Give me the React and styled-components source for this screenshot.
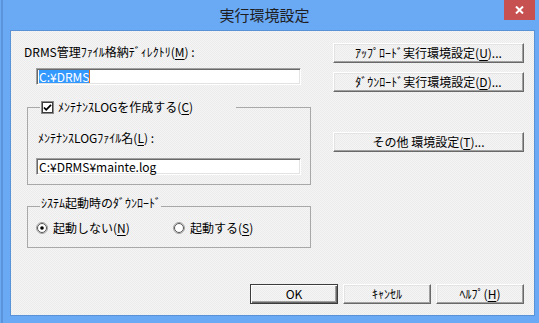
import React from 'react';
import styled, { createGlobalStyle, css } from 'styled-components';

const GlobalStyle = createGlobalStyle`
  html, body {
    margin: 0;
    padding: 0;
    overflow: hidden;
    background: #6aa9f4;
  }
  body {
    font-family: "Noto Sans CJK JP", "Noto Sans", sans-serif;
  }
`;

const face = css`
  background: repeating-conic-gradient(#f5f5f5 0% 25%, #ebebeb 0% 50%) 0 0 / 2px 2px;
`;

const Window = styled.div`
  width: 539px;
  height: 323px;
  display: flex;
  flex-direction: column;
  background: #6aa9f4;
  box-shadow: inset 1px 0 #6aa9f4, inset 3px 0 #5b94da;
`;

const TitleBar = styled.div`
  height: 30px;
  display: flex;
  align-items: flex-start;
  padding-right: 4px;
  flex-shrink: 0;
`;

const Title = styled.div`
  flex: 1;
  padding-left: 25px;
  text-align: center;
  font-size: 15px;
  line-height: 30px;
  color: #1e1e1e;
`;

const CloseButton = styled.div`
  width: 31px;
  height: 20px;
  background: #c75050;
  display: flex;
  align-items: center;
  justify-content: center;
`;

const Client = styled.div`
  flex: 1;
  margin: 0 4px 7px 10px;
  border: 1px solid #5a92d8;
  ${face};
  display: flex;
  flex-direction: column;
  padding: 12px 10px 11px 13px;
  font-size: 12px;
  line-height: 15px;
  color: #000;
`;

const Main = styled.div`
  display: flex;
  justify-content: space-between;
`;

const LeftColumn = styled.div`
  width: 287px;
  display: flex;
  flex-direction: column;
`;

const RightColumn = styled.div`
  width: 191px;
  display: flex;
  flex-direction: column;
`;

const Label = styled.div`
  margin-top: ${p => p.$top || 0}px;
  padding-left: ${p => p.$indent || 0}px;
  white-space: nowrap;
`;

const Key = styled.span`
  text-decoration: underline;
  text-underline-offset: 2px;
`;

const Edit = styled.div`
  box-sizing: border-box;
  width: 265px;
  height: 17px;
  margin-top: ${p => p.$top || 0}px;
  margin-left: ${p => p.$left || 0}px;
  background: #fff;
  border: 1px solid;
  border-color: #a0a0a0 #fff #fff #a0a0a0;
  box-shadow: inset 1px 1px #696969, inset -1px -1px #e3e3e3;
  padding: 0 2px;
  display: flex;
  align-items: center;
  white-space: nowrap;
  line-height: 13px;
`;

const Selected = styled.span`
  background: #3399ff;
  color: #fff;
`;

const Caret = styled.span`
  display: inline-block;
  width: 1px;
  height: 13px;
  background: #e07020;
`;

const Group = styled.fieldset`
  margin: ${p => p.$top || 0}px 0 0 3px;
  padding: 0 ${p => p.$padR || 0}px ${p => p.$padB || 0}px 8px;
  border: 1px solid #a8a8a8;
  min-width: 0;
`;

const Legend = styled.legend`
  margin-left: 4px;
  padding: 0 0 ${p => p.$padB || 0}px 1px;
  width: ${p => (p.$w ? `${p.$w}px` : 'auto')};
  box-sizing: border-box;
  display: flex;
  align-items: center;
  gap: 4px;
  line-height: ${p => p.$lh || 15}px;
  white-space: nowrap;
`;

const RadioRow = styled.div`
  margin-top: 2px;
  display: grid;
  grid-template-columns: 137px auto;
`;

const Option = styled.div`
  display: flex;
  align-items: center;
  gap: 5px;
  white-space: nowrap;
`;

const Button = styled.button`
  box-sizing: border-box;
  width: ${p => p.$w || 88}px;
  height: 20px;
  margin: ${p => p.$top || 0}px 0 0 0;
  padding: 0;
  font: 12px/14px "Noto Sans CJK JP", "Noto Sans", sans-serif;
  color: #000;
  background: transparent;
  border: 1px solid;
  border-color: #fff #696969 #696969 #fff;
  box-shadow: inset -1px -1px #a0a0a0, inset 1px 1px #e3e3e3;
  white-space: nowrap;
  ${p => p.$default && css`
    border: 1px solid #3c3c3c;
    box-shadow: inset 1px 1px #fff, inset -1px -1px #696969, inset -2px -2px #a0a0a0;
  `}
`;

const Footer = styled.div`
  margin-top: auto;
  display: flex;
  justify-content: flex-end;
  gap: 5px;
`;

function CheckBox() {
  return (
    <svg width="13" height="13" viewBox="0 0 13 13">
      <rect x="0.5" y="0.5" width="12" height="12" fill="#fff" stroke="#8a8a8a" />
      <rect x="1.5" y="1.5" width="10" height="10" fill="none" stroke="#3c3c3c" />
      <path d="M3 6.5 L5.2 8.8 L10 3.8" fill="none" stroke="#000" strokeWidth="1.8" />
    </svg>
  );
}

function Radio({ checked }) {
  return (
    <svg width="12" height="12" viewBox="0 0 12 12">
      <circle cx="6" cy="6" r="5.5" fill="#fff" stroke="#a0a0a0" />
      <circle cx="6" cy="6" r="4.5" fill="#fff" stroke="#555" />
      {checked && <circle cx="6" cy="6" r="1.8" fill="#000" />}
    </svg>
  );
}

export default function App() {
  return (
    <Window>
      <GlobalStyle />
      <TitleBar>
        <Title>実行環境設定</Title>
        <CloseButton>
          <svg width="9" height="8" viewBox="0 0 9 8">
            <path d="M1 0.5 L8 7.5 M8 0.5 L1 7.5" stroke="#fff" strokeWidth="2" />
          </svg>
        </CloseButton>
      </TitleBar>
      <Client>
        <Main>
          <LeftColumn>
            <Label $top={1}>DRMS管理ﾌｧｲﾙ格納ﾃﾞｨﾚｸﾄﾘ(<Key>M</Key>) :</Label>
            <Edit $top={9} $left={12}>
              <Selected>C:¥DRMS</Selected>
              <Caret />
            </Edit>
            <Group $top={14} $padB={9}>
              <Legend $w={196} $lh={16}>
                <CheckBox />
                <span>ﾒﾝﾃﾅﾝｽLOGを作成する(<Key>C</Key>)</span>
              </Legend>
              <Label $top={15} $indent={2}>ﾒﾝﾃﾅﾝｽLOGﾌｧｲﾙ名(<Key>L</Key>) :</Label>
              <Edit $top={13}>C:¥DRMS¥mainte.log</Edit>
            </Group>
            <Group $top={10} $padB={12}>
              <Legend $padB={8}>
                <span>ｼｽﾃﾑ起動時のﾀﾞｳﾝﾛｰﾄﾞ</span>
              </Legend>
              <RadioRow>
                <Option>
                  <Radio checked />
                  <span>起動しない(<Key>N</Key>)</span>
                </Option>
                <Option>
                  <Radio />
                  <span>起動する(<Key>S</Key>)</span>
                </Option>
              </RadioRow>
            </Group>
          </LeftColumn>
          <RightColumn>
            <Button $w={191}>ｱｯﾌﾟﾛｰﾄﾞ実行環境設定(<Key>U</Key>)...</Button>
            <Button $w={191} $top={9}>ﾀﾞｳﾝﾛｰﾄﾞ実行環境設定(<Key>D</Key>)...</Button>
            <Button $w={191} $top={40}>その他 環境設定(<Key>T</Key>)...</Button>
          </RightColumn>
        </Main>
        <Footer>
          <Button $default>OK</Button>
          <Button>ｷｬﾝｾﾙ</Button>
          <Button>ﾍﾙﾌﾟ(<Key>H</Key>)</Button>
        </Footer>
      </Client>
    </Window>
  );
}
